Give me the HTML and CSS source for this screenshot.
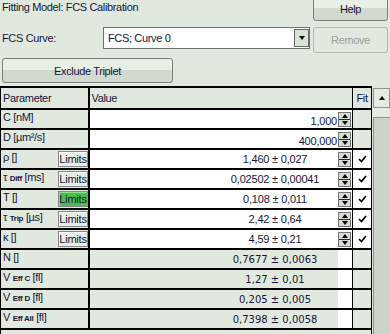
FILE: index.html
```html
<!DOCTYPE html>
<html lang="en">
<head>
    <meta charset="UTF-8">
    <meta name="viewport" content="width=device-width, initial-scale=1.0">
    <title>Fitting Model - FCS Calibration</title>
    <link rel="stylesheet" href="styles.css">
</head>
<body>
    <div class="panel">
        <div class="top-row">
            <span class="title">Fitting Model: FCS Calibration</span>
            <button class="btn help">Help</button>
        </div>

        <div class="curve-row">
            <label class="curve-label">FCS Curve:</label>
            <div class="combo">
                <span>FCS; Curve 0</span>
                <span class="combo-arrow"><i></i></span>
            </div>
            <button class="btn remove" disabled>Remove</button>
        </div>

        <button class="btn exclude">Exclude Triplet</button>

        <div class="table-wrap">
            <div class="table">
                <div class="row head">
                    <div class="p"><span class="lbl">Parameter</span></div>
                    <div class="v-head">Value</div>
                    <div class="f">Fit</div>
                </div>

                <div class="row">
                    <div class="p"><span class="lbl">C [nM]</span></div>
                    <div class="v num">1,000</div>
                    <div class="s"><span class="spin"><i class="up"></i><i class="dn"></i></span></div>
                    <div class="f"></div>
                </div>
                <div class="row">
                    <div class="p"><span class="lbl">D [µm²/s]</span></div>
                    <div class="v num">400,000</div>
                    <div class="s"><span class="spin"><i class="up"></i><i class="dn"></i></span></div>
                    <div class="f"></div>
                </div>
                <div class="row">
                    <div class="p"><span class="lbl">ρ []</span><button class="lim">Limits</button></div>
                    <div class="v pm">1,460 ± 0,027</div>
                    <div class="s"><span class="spin"><i class="up"></i><i class="dn"></i></span></div>
                    <div class="f on"><svg class="chk" width="9" height="8" viewBox="0 0 9 8"><path d="M1 4l2.5 2.5L8 1"/></svg></div>
                </div>
                <div class="row">
                    <div class="p"><span class="lbl">τ <small>Diff</small> [ms]</span><button class="lim">Limits</button></div>
                    <div class="v pm">0,02502 ± 0,00041</div>
                    <div class="s"><span class="spin"><i class="up"></i><i class="dn"></i></span></div>
                    <div class="f on"><svg class="chk" width="9" height="8" viewBox="0 0 9 8"><path d="M1 4l2.5 2.5L8 1"/></svg></div>
                </div>
                <div class="row">
                    <div class="p"><span class="lbl">T []</span><button class="lim green">Limits</button></div>
                    <div class="v pm">0,108 ± 0,011</div>
                    <div class="s"><span class="spin"><i class="up"></i><i class="dn"></i></span></div>
                    <div class="f on"><svg class="chk" width="9" height="8" viewBox="0 0 9 8"><path d="M1 4l2.5 2.5L8 1"/></svg></div>
                </div>
                <div class="row">
                    <div class="p"><span class="lbl">τ <small>Trip</small> [µs]</span><button class="lim">Limits</button></div>
                    <div class="v pm">2,42 ± 0,64</div>
                    <div class="s"><span class="spin"><i class="up"></i><i class="dn"></i></span></div>
                    <div class="f on"><svg class="chk" width="9" height="8" viewBox="0 0 9 8"><path d="M1 4l2.5 2.5L8 1"/></svg></div>
                </div>
                <div class="row">
                    <div class="p"><span class="lbl">κ []</span><button class="lim">Limits</button></div>
                    <div class="v pm">4,59 ± 0,21</div>
                    <div class="s"><span class="spin"><i class="up"></i><i class="dn"></i></span></div>
                    <div class="f on"><svg class="chk" width="9" height="8" viewBox="0 0 9 8"><path d="M1 4l2.5 2.5L8 1"/></svg></div>
                </div>

                <div class="row calc">
                    <div class="p"><span class="lbl">N []</span></div>
                    <div class="v pm">0,7677 ± 0,0063</div>
                    <div class="s"></div>
                    <div class="f"></div>
                </div>
                <div class="row calc">
                    <div class="p"><span class="lbl">V <small>Eff C</small> [fl]</span></div>
                    <div class="v pm">1,27 ± 0,01</div>
                    <div class="s"></div>
                    <div class="f"></div>
                </div>
                <div class="row calc">
                    <div class="p"><span class="lbl">V <small>Eff D</small> [fl]</span></div>
                    <div class="v pm">0,205 ± 0,005</div>
                    <div class="s"></div>
                    <div class="f"></div>
                </div>
                <div class="row calc">
                    <div class="p"><span class="lbl">V <small>Eff All</small> [fl]</span></div>
                    <div class="v pm">0,7398 ± 0,0058</div>
                    <div class="s"></div>
                    <div class="f"></div>
                </div>
            </div>

            <div class="scrollbar">
                <div class="sb-up"><i></i></div>
                <div class="sb-track"></div>
                <div class="sb-thumb"></div>
            </div>
        </div>
    </div>
</body>
</html>
```

FILE: styles.css
```css
body {
    margin: 0;
    background-color: #e1e9de;
    font-family: "Liberation Sans", Arial, sans-serif;
    font-size: 11px;
    letter-spacing: -0.35px;
    color: #16163c;
}
.panel {
    width: 390px;
    height: 334px;
    overflow: hidden;
}

/* top controls */
.top-row {
    display: flex;
    justify-content: space-between;
    align-items: flex-start;
    height: 21px;
}
.title {
    padding-left: 2px;
    line-height: 14px;
}
.btn {
    font: inherit;
    letter-spacing: inherit;
    color: inherit;
    padding: 0;
    border: 1px solid #7b7f7a;
    border-radius: 3px;
    background: linear-gradient(#e8efe5 0 48%, #d2dacf 48% 100%);
}
.help {
    width: 75px;
    height: 25px;
    margin-top: -4px;
    margin-right: 2px;
}
.curve-row {
    display: flex;
    align-items: flex-start;
    margin-top: 6px;
}
.curve-label {
    width: 101px;
    padding-left: 2px;
    line-height: 22px;
}
.combo {
    width: 207px;
    height: 22px;
    box-sizing: border-box;
    border: 1px solid #6f6f6f;
    background-color: #fff;
    display: flex;
    align-items: center;
    padding-left: 4px;
}
.combo-arrow {
    margin-left: auto;
    margin-right: 0;
    width: 15px;
    height: 18px;
    box-sizing: border-box;
    border: 1px solid #6a6a6a;
    background-color: #dbe3d8;
    display: flex;
    align-items: center;
    justify-content: center;
}
.combo-arrow i {
    border-left: 3.5px solid transparent;
    border-right: 3.5px solid transparent;
    border-top: 4px solid #000;
}
.remove {
    width: 75px;
    height: 26px;
    margin-left: 3px;
    border-color: #b4bcb1;
    background: #e1e9de;
    color: #9aa097;
}
.exclude {
    display: block;
    width: 171px;
    height: 25px;
    margin: 5px 0 0 2px;
}

/* parameter table */
.table-wrap {
    display: flex;
    margin-top: 3px;
}
.table {
    width: 372px;
    box-sizing: border-box;
    border-left: 1px solid #000;
    border-right: 1px solid #000;
    border-top: 2px solid #000;
}
.row {
    display: flex;
    height: 20px;
    box-sizing: border-box;
    border-bottom: 2px solid #000;
}
.row.head {
    height: 22px;
}
.p {
    width: 89px;
    box-sizing: border-box;
    border-right: 2px solid #000;
    padding-left: 2px;
    display: flex;
    justify-content: space-between;
    align-items: center;
    background-color: #e1e9de;
}
.lbl {
    align-self: flex-start;
    line-height: 14px;
    white-space: nowrap;
}
.head .lbl {
    align-self: center;
}
.lbl small {
    font-size: 8px;
    font-weight: bold;
    letter-spacing: -0.3px;
}
.lim {
    width: 30px;
    height: 16px;
    box-sizing: border-box;
    padding: 0;
    font: inherit;
    letter-spacing: -0.2px;
    color: inherit;
    border: 1px solid #8a8a8a;
    box-shadow: inset 1px 1px 0 #fff;
    background-color: #e6ede3;
}
.lim.green {
    background-color: #4cbe50;
    box-shadow: inset 1px 1px 0 #8ee08e;
}
.v-head {
    width: 262px;
    padding-left: 2px;
    display: flex;
    align-items: center;
}
.v {
    width: 248px;
    box-sizing: border-box;
    background-color: #fff;
    display: flex;
    letter-spacing: -0.2px;
}
.v.num {
    justify-content: flex-end;
    align-items: flex-end;
    line-height: 14px;
    padding-right: 1px;
}
.v.pm {
    justify-content: center;
    align-items: center;
    padding-left: 122px;
}
.s {
    width: 14px;
    background-color: #fff;
    display: flex;
    align-items: center;
}
.spin {
    width: 13px;
    height: 15px;
    box-sizing: border-box;
    border: 1px solid #767676;
    background-color: #d6ddd3;
    display: flex;
    flex-direction: column;
}
.spin i {
    flex: 1;
    display: flex;
    align-items: center;
    justify-content: center;
}
.spin i + i {
    border-top: 1px solid #2a2a2a;
}
.spin .up::before {
    content: "";
    border-left: 3.5px solid transparent;
    border-right: 3.5px solid transparent;
    border-bottom: 4px solid #000;
}
.spin .dn::before {
    content: "";
    border-left: 3.5px solid transparent;
    border-right: 3.5px solid transparent;
    border-top: 4px solid #000;
}
.f {
    width: 19px;
    box-sizing: border-box;
    border-left: 1px solid #000;
    background-color: #e1e9de;
    display: flex;
    align-items: center;
    justify-content: center;
}
.f.on {
    background-color: #fff;
}
.chk path {
    fill: none;
    stroke: #000;
    stroke-width: 1.7;
}
.calc .v {
    background-color: #e1e9de;
    font-family: "DejaVu Sans", Verdana, sans-serif;
    font-size: 10px;
    letter-spacing: 0;
}

/* vertical scrollbar */
.scrollbar {
    width: 18px;
    height: 248px;
    box-sizing: border-box;
    padding-top: 2px;
    display: flex;
    flex-direction: column;
}
.sb-up {
    height: 20px;
    box-sizing: border-box;
    margin-left: 1px;
    border: 1px solid #8d958b;
    background-color: #e4ebe1;
    display: flex;
    align-items: center;
    justify-content: center;
}
.sb-up i {
    border-left: 3.5px solid transparent;
    border-right: 3.5px solid transparent;
    border-bottom: 4px solid #000;
}
.sb-track {
    height: 9px;
    margin-left: 1px;
    background-color: #e4ebe1;
}
.sb-thumb {
    flex: 1;
    margin-left: 1px;
    border-left: 1px solid #8d958b;
    border-top: 1px solid #8d958b;
    background-color: #ccd4c9;
}
```
